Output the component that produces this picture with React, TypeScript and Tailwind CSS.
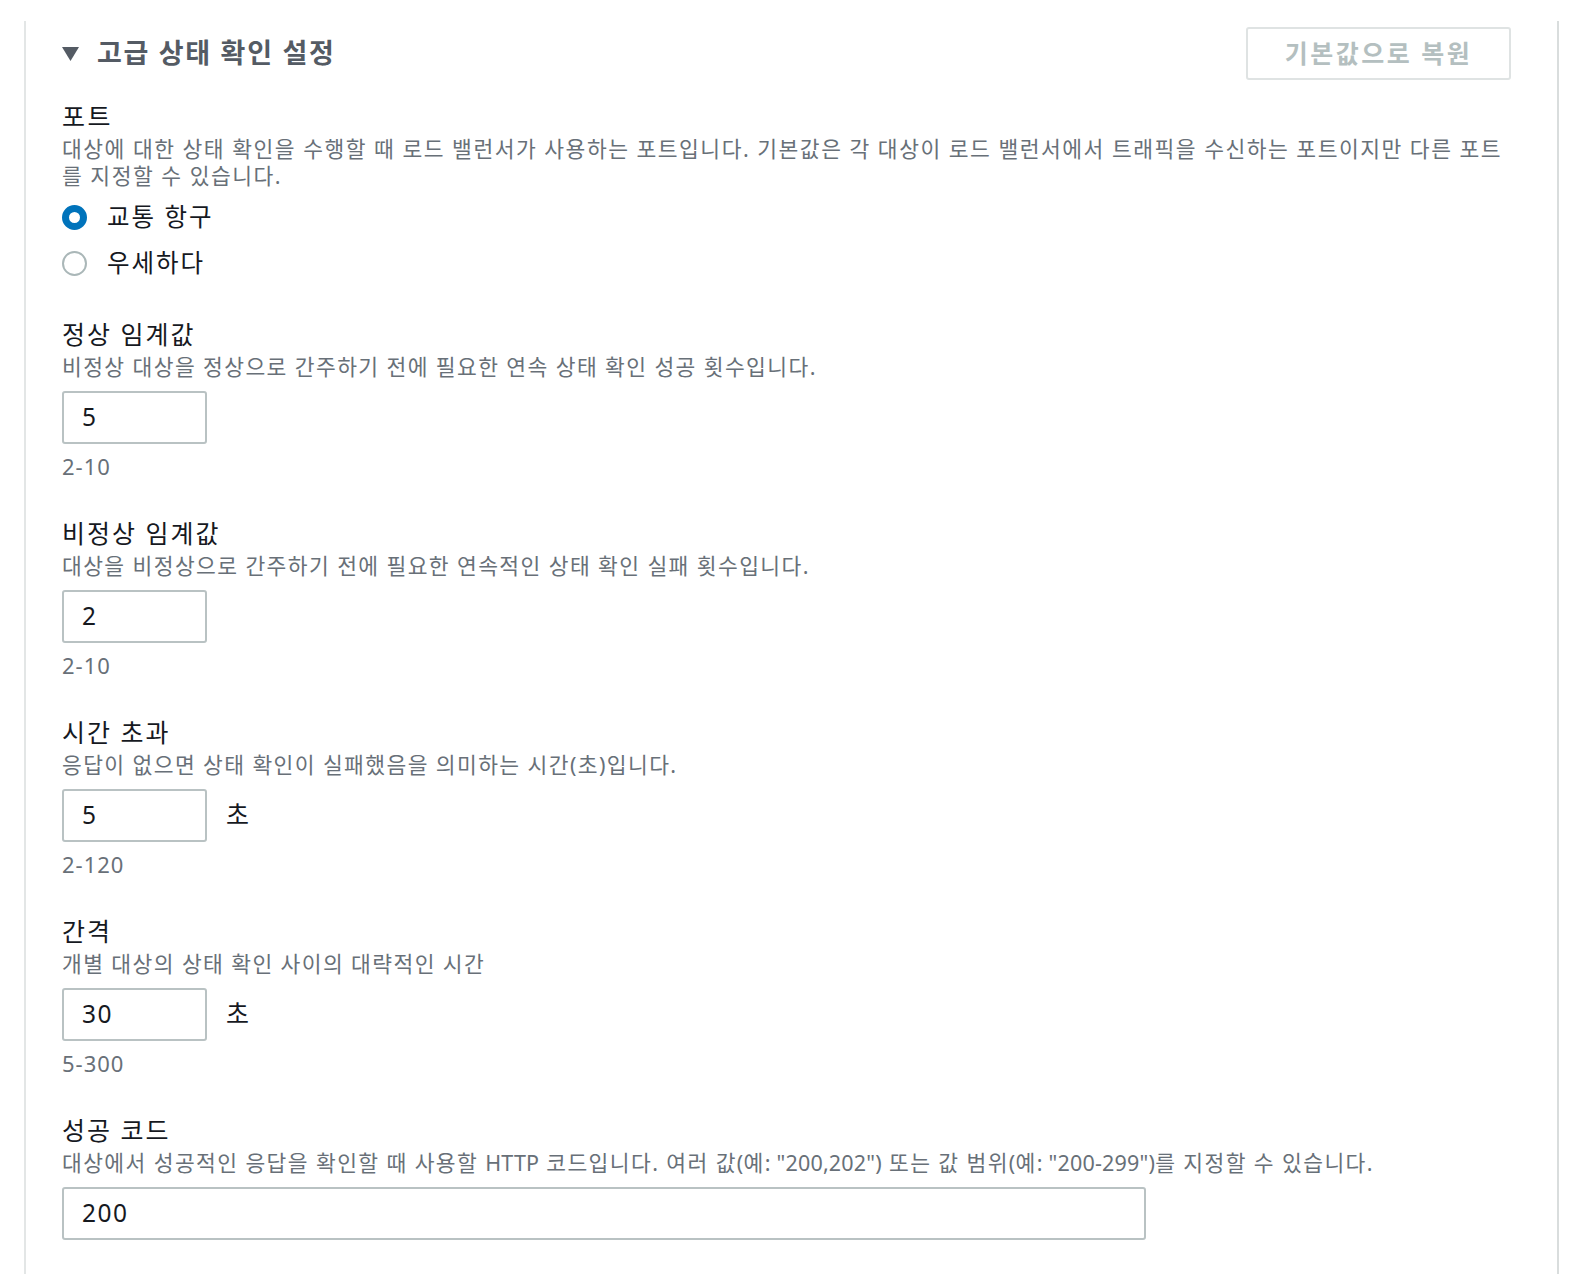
import React from "react";

const FONT = { fontFamily: '"Noto Sans", "Noto Sans CJK KR", sans-serif' };

function Field({
  label,
  desc,
  value,
  range,
  unit,
  wide,
  className,
}: {
  label: string;
  desc: React.ReactNode;
  value: string;
  range?: string;
  unit?: string;
  wide?: boolean;
  className?: string;
}) {
  return (
    <div className={className}>
      <div className="text-[25px] leading-[30px] tracking-[2px] text-[#16191f]">{label}</div>
      <div className="mt-[4px] text-[21.5px] leading-[27px] tracking-[1.4px] text-[#687078]">{desc}</div>
      <div className="mt-[11px] flex items-center">
        <div
          className={`${wide ? "w-[1084px]" : "w-[145px]"} h-[53px] border-2 border-[#b9c2c3] rounded-[3px] pl-[18px] flex items-center text-[24.5px] tracking-[1.5px] text-[#16191f]`}
        >
          {value}
        </div>
        {unit && <div className="ml-[19px] text-[25px] tracking-[1px] text-[#16191f] -mt-[2px]">{unit}</div>}
      </div>
      {range && (
        <div className="mt-[9px] text-[22px] leading-[27px] tracking-[1px] text-[#687078]">{range}</div>
      )}
    </div>
  );
}

const L = ({ children }: { children: React.ReactNode }) => (
  <span className="tracking-[0.2px]">{children}</span>
);

export default function App() {
  return (
    <div className="w-[1578px] h-[1284px] bg-white pt-[21px]" style={FONT}>
      <div className="ml-[24px] w-[1535px] h-[1253px] border-l-2 border-r-2 border-l-[#e3e6e6] border-r-[#d9dddd] pl-[36px] pr-[46px] pt-[6px]">
        <div className="flex items-center justify-between h-[53px]">
          <div className="flex items-center -mt-[2px]">
            <svg width="17" height="14" viewBox="0 0 17 14" className="mt-[2px]">
              <polygon points="0,0 17,0 8.5,14" fill="#545b64" />
            </svg>
            <span className="ml-[18px] text-[27px] font-bold tracking-[1.7px] text-[#545b64] leading-[34px]">
              고급 상태 확인 설정
            </span>
          </div>
          <div className="w-[265px] h-[53px] border-2 border-[#dfe3e3] rounded-[3px] flex items-center justify-center text-[25px] font-bold tracking-[2.5px] text-[#b4bfc0]">
            기본값으로 복원
          </div>
        </div>

        <div className="mt-[21px]">
          <div className="text-[25px] leading-[30px] tracking-[2.5px] text-[#16191f]">포트</div>
          <div className="mt-[4px] text-[21.5px] leading-[27px] tracking-[1.5px] text-[#687078]">
            대상에 대한 상태 확인을 수행할 때 로드 밸런서가 사용하는 포트입니다. 기본값은 각 대상이 로드 밸런서에서 트래픽을 수신하는 포트이지만 다른 포트를 지정할 수 있습니다.
          </div>
          <div className="mt-[5px]">
            <div className="h-[46px] flex items-center">
              <div className="w-[25px] h-[25px] rounded-full border-[7px] border-[#0073bb] bg-white" />
              <span className="ml-[20px] text-[24.5px] tracking-[2px] text-[#16191f]">교통 항구</span>
            </div>
            <div className="h-[46px] flex items-center">
              <div className="w-[25px] h-[25px] rounded-full border-2 border-[#aab7b8] bg-white" />
              <span className="ml-[20px] text-[24.5px] tracking-[2px] text-[#16191f]">우세하다</span>
            </div>
          </div>
        </div>

        <Field
          className="mt-[33px]"
          label="정상 임계값"
          desc="비정상 대상을 정상으로 간주하기 전에 필요한 연속 상태 확인 성공 횟수입니다."
          value="5"
          range="2-10"
        />
        <Field
          className="mt-[38px]"
          label="비정상 임계값"
          desc="대상을 비정상으로 간주하기 전에 필요한 연속적인 상태 확인 실패 횟수입니다."
          value="2"
          range="2-10"
        />
        <Field
          className="mt-[38px]"
          label="시간 초과"
          desc="응답이 없으면 상태 확인이 실패했음을 의미하는 시간(초)입니다."
          value="5"
          unit="초"
          range="2-120"
        />
        <Field
          className="mt-[38px]"
          label="간격"
          desc="개별 대상의 상태 확인 사이의 대략적인 시간"
          value="30"
          unit="초"
          range="5-300"
        />
        <Field
          className="mt-[38px]"
          label="성공 코드"
          desc={
            <>
              대상에서 성공적인 응답을 확인할 때 사용할 <L>HTTP</L> 코드입니다. 여러 값<L>(</L>예<L>: "200,202")</L> 또는 값 범위<L>(</L>예<L>: "200-299")</L>를 지정할 수 있습니다.
            </>
          }
          value="200"
          wide
        />
      </div>
    </div>
  );
}
